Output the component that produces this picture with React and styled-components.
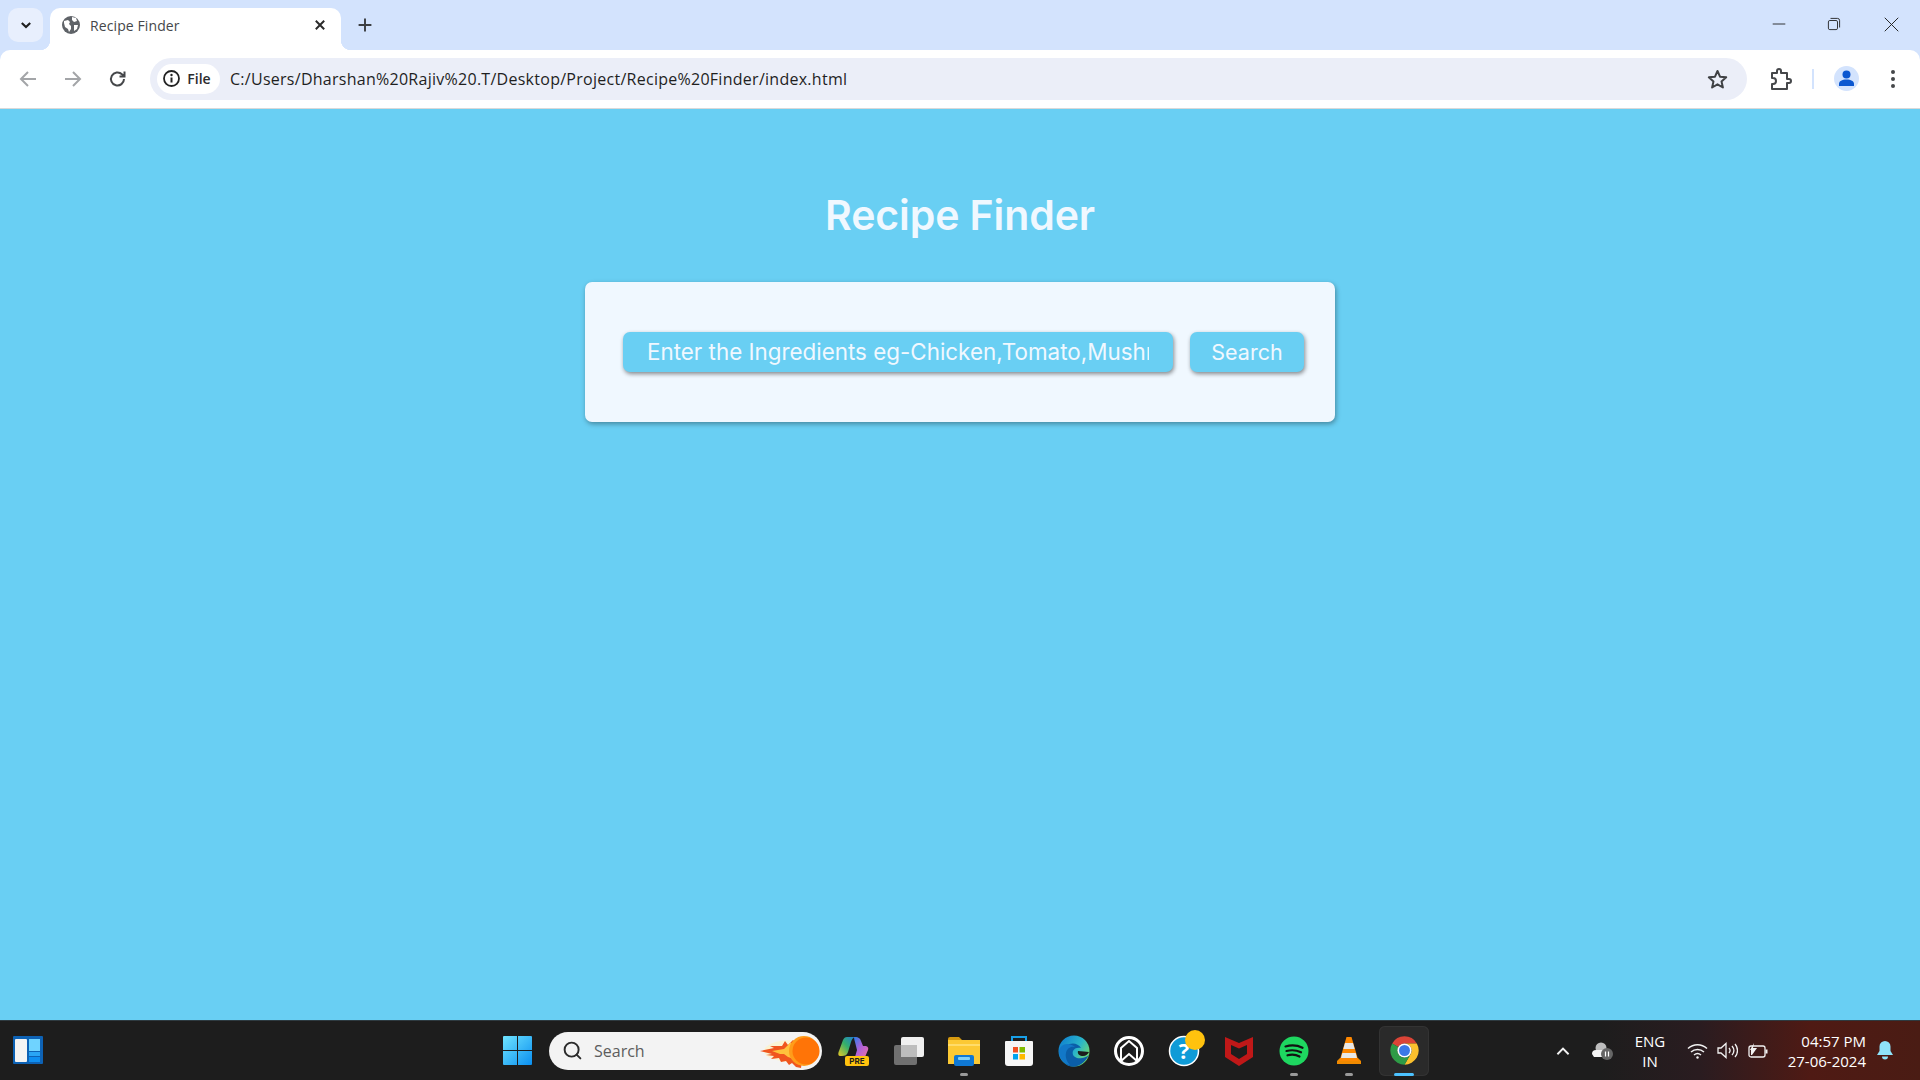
import React from 'react';
import styled, { createGlobalStyle } from 'styled-components';
import { Search as SearchGlass } from 'lucide-react';

const GlobalStyle = createGlobalStyle`
    * { box-sizing: border-box; }
    html, body { margin: 0; padding: 0; height: 100%; overflow: hidden; }
    body { font-family: "Open Sans", "Liberation Sans", sans-serif; }
    #root { height: 100%; }
`;

const Screen = styled.div`
    width: 1920px;
    height: 1080px;
    display: flex;
    flex-direction: column;
    background: #d3e3fd;
`;

/* ---------- browser chrome ---------- */
const TabStrip = styled.div`
    height: 50px;
    flex: none;
    display: flex;
    align-items: flex-end;
    padding-left: 8px;
    color: #1f1f1f;
`;
const TabList = styled.button`
    width: 35px;
    height: 34px;
    margin-bottom: 8px;
    border: 0;
    padding: 0;
    border-radius: 10px;
    background: #e8effd;
    display: flex;
    align-items: center;
    justify-content: center;
`;
const Tab = styled.div`
    position: relative;
    width: 291px;
    height: 42px;
    margin-left: 7px;
    padding: 0 14px 8px 12px;
    background: #fff;
    border-radius: 10px 10px 0 0;
    display: flex;
    align-items: center;
    &::before, &::after {
        content: "";
        position: absolute;
        bottom: 0;
        width: 10px;
        height: 10px;
    }
    &::before { left: -10px; background: radial-gradient(circle at 0 0, transparent 10px, #fff 10.5px); }
    &::after { right: -10px; background: radial-gradient(circle at 100% 0, transparent 10px, #fff 10.5px); }
`;
const TabTitle = styled.span`
    flex: 1;
    margin-left: 10px;
    font-size: 14px;
    color: #45474a;
    letter-spacing: 0.1px;
`;
const NewTab = styled.div`
    width: 30px;
    height: 42px;
    margin-left: 9px;
    padding-bottom: 8px;
    display: flex;
    align-items: center;
    justify-content: center;
`;
const WindowButtons = styled.div`
    margin-left: auto;
    height: 50px;
    display: flex;
    align-items: center;
    padding: 0 0 2px 0;
`;
const WindowButton = styled.div`
    width: ${(p) => p.$w}px;
    display: flex;
    justify-content: center;
`;

const Toolbar = styled.div`
    height: 59px;
    flex: none;
    background: #fff;
    border-radius: 10px 10px 0 0;
    border-bottom: 1px solid #d9d9d9;
    display: flex;
    align-items: center;
    padding: 0 0 1px 10px;
`;
const NavButton = styled.div`
    width: 36px;
    height: 36px;
    margin-right: ${(p) => p.$gap || 9}px;
    display: flex;
    align-items: center;
    justify-content: center;
`;
const Omnibox = styled.div`
    width: 1597px;
    height: 42px;
    padding: 0 11px 0 7px;
    background: #ebeef8;
    border-radius: 21px;
    display: flex;
    align-items: center;
`;
const FileChip = styled.div`
    width: 63px;
    height: 30px;
    padding-right: 3px;
    background: #fff;
    border-radius: 15px;
    display: flex;
    align-items: center;
    justify-content: center;
    gap: 7px;
    font-size: 14px;
    font-weight: 600;
    color: #2b2c2e;
`;
const Url = styled.span`
    margin-left: 10px;
    flex: 1;
    font-size: 16px;
    color: #1f1f1f;
    letter-spacing: 0.27px;
`;
const ToolIcons = styled.div`
    flex: 1;
    display: flex;
    align-items: center;
`;
const ToolSlot = styled.div`
    width: ${(p) => p.$w}px;
    margin-left: ${(p) => p.$ml || 0}px;
    display: flex;
    justify-content: center;
`;
const Divider = styled.div`
    width: 2px;
    height: 20px;
    background: #d3e3fd;
`;
const Avatar = styled.div`
    width: 25px;
    height: 25px;
    border-radius: 50%;
    background: #d3e3fd;
    display: flex;
    align-items: center;
    justify-content: center;
`;

/* ---------- page ---------- */
const Page = styled.main`
    flex: 1;
    min-height: 0;
    background: #69cff3;
    display: flex;
    flex-direction: column;
    align-items: center;
    padding-top: 81px;
`;
const Title = styled.h1`
    margin: 0;
    height: 50px;
    line-height: 50px;
    font-family: Inter, "Liberation Sans", sans-serif;
    font-size: 41px;
    font-weight: 600;
    letter-spacing: -0.1px;
    color: #f0f8ff;
`;
const Card = styled.div`
    width: 750px;
    height: 140px;
    margin-top: 42px;
    padding: 50px 31px 50px 38px;
    background: #f0f8ff;
    border-radius: 7px;
    box-shadow: 1px 2px 5px rgba(0, 0, 0, 0.35);
    display: flex;
    gap: 17px;
`;
const IngredientInput = styled.input`
    width: 550px;
    height: 40px;
    padding: 0 24px 2px;
    border: 0;
    outline: 0;
    border-radius: 7px;
    background: #69cff3;
    color: #f0f8ff;
    font-family: Inter, "Liberation Sans", sans-serif;
    font-size: 22.4px;
    box-shadow: 1px 2px 4px rgba(0, 0, 0, 0.45);
    &::placeholder { color: #f0f8ff; opacity: 1; }
`;
const SearchButton = styled.button`
    width: 114px;
    height: 40px;
    border: 0;
    padding: 0 0 1px;
    border-radius: 7px;
    background: #69cff3;
    color: #f0f8ff;
    font-family: Inter, "Liberation Sans", sans-serif;
    font-size: 21.5px;
    box-shadow: 1px 2px 4px rgba(0, 0, 0, 0.45);
`;

/* ---------- taskbar ---------- */
const Taskbar = styled.footer`
    height: 60px;
    flex: none;
    display: flex;
    align-items: center;
    color: #fff;
    border-top: 1px solid #2e3a40;
    background: linear-gradient(90deg, #1d1d1d 0, #1d1d1d 1600px, #2a1c20 1700px, #4f1a14 1810px, #4a1c14 1920px);
`;
const Widgets = styled.div`
    width: 30px;
    height: 30px;
    margin: 0 449px 0 13px;
    flex: none;
`;
const TaskIcon = styled.div`
    position: relative;
    width: 50px;
    height: 50px;
    margin-right: 5px;
    flex: none;
    display: flex;
    align-items: center;
    justify-content: center;
    border-radius: 6px;
    background: ${(p) => (p.$active ? '#2a2a2a' : 'transparent')};
    ${(p) => p.$active && 'box-shadow: inset 0 0 0 1px #333;'}
    &::after {
        content: "";
        display: ${(p) => (p.$active || p.$open ? 'block' : 'none')};
        position: absolute;
        bottom: 0;
        left: 50%;
        transform: translateX(-50%);
        width: ${(p) => (p.$active ? 20 : 8)}px;
        height: 3px;
        border-radius: 2px;
        background: ${(p) => (p.$active ? '#4cc2ff' : '#9a9a9a')};
    }
`;
const SearchPill = styled.div`
    position: relative;
    width: 273px;
    height: 38px;
    margin: 0 7px 0 2px;
    flex: none;
    padding-left: 13px;
    border-radius: 19px;
    background: #f3f3f3;
    display: flex;
    align-items: center;
    gap: 11px;
    font-size: 16px;
    color: #5d5d5d;
`;
const Fireball = styled.div`
    position: absolute;
    right: 2px;
    top: 2px;
    height: 34px;
`;
const Tray = styled.div`
    margin-left: auto;
    padding-right: 16px;
    display: flex;
    align-items: center;
    height: 60px;
`;
const TraySlot = styled.div`
    width: ${(p) => p.$w}px;
    display: flex;
    justify-content: center;
    align-items: center;
`;
const Lang = styled.div`
    width: 50px;
    margin-right: 9px;
    text-align: center;
    font-size: 15px;
    line-height: 20px;
`;
const Clock = styled.div`
    width: 92px;
    text-align: right;
    font-size: 15px;
    line-height: 20px;
    margin-left: 2px;
    white-space: nowrap;
`;

/* ---------- drawings ---------- */
const GlobeIcon = () => (
    <svg width="18" height="18" viewBox="0 0 18 18">
        <circle cx="9" cy="9" r="9" fill="#5f6368" />
        <path d="M2 5l4-1 2 2-1 2 2 2v3l-2 3-1-3-3-2-1-4zM10 1l4 1 1 3-3 1-2-2zM12 9h4l-1 4-3 2z" fill="#fff" />
    </svg>
);
const StrokeIcon = ({ size = 20, color = '#444', width = 2, children }) => (
    <svg width={size} height={size} viewBox="0 0 20 20" fill="none" stroke={color} strokeWidth={width}>
        {children}
    </svg>
);
const WinLogo = () => (
    <svg width="29" height="29" viewBox="0 0 29 29">
        <defs>
            <linearGradient id="win" x1="0" y1="0" x2="1" y2="1">
                <stop offset="0" stopColor="#6fe4ff" />
                <stop offset="1" stopColor="#0a8ff0" />
            </linearGradient>
        </defs>
        <path d="M1 0h13v14H0V1a1 1 0 0 1 1-1zM15 0h13a1 1 0 0 1 1 1v13H15zM0 15h14v14H1a1 1 0 0 1-1-1zM15 15h14v13a1 1 0 0 1-1 1H15z" fill="url(#win)" />
    </svg>
);
const WidgetIcon = () => (
    <svg width="30" height="30" viewBox="0 0 30 30">
        <rect width="30" height="28" fill="#0d62b5" rx="1" />
        <rect x="2" y="3" width="12" height="23" fill="#f4f4f4" rx="1" />
        <rect x="16" y="3" width="11" height="12" fill="#6fd3ff" />
        <rect x="16" y="16" width="11" height="4" fill="#2aa5f5" />
        <rect x="16" y="21" width="11" height="5" fill="#0f8ef0" />
    </svg>
);
const Flame = () => (
    <svg width="62" height="34" viewBox="0 0 62 34">
        <ellipse cx="34" cy="17" rx="28" ry="11" fill="#fff3c0" opacity="0.6" />
        <path d="M2 17l14-3-4-2 12 0 3-5 3 4 5-5 3 3 6-6 3 3-4 28-5-1-4-4-3 2-3-4-5 1-2-4-8 1 3-3-8-1 6-1z" fill="#f0561e" />
        <path d="M14 17l12-2 6-6 6 0-2 16-6-2-4-3-4 0z" fill="#ffc23c" />
        <circle cx="46" cy="17" r="15" fill="#ff9c1a" />
        <circle cx="48" cy="17" r="13.5" fill="#ff7407" />
    </svg>
);
const CopilotIcon = () => (
    <svg width="32" height="32" viewBox="0 0 32 32">
        <defs>
            <linearGradient id="cpA" x1="0" y1="1" x2="1" y2="0">
                <stop offset="0" stopColor="#e8c826" />
                <stop offset="0.5" stopColor="#34b06a" />
                <stop offset="1" stopColor="#1e78e0" />
            </linearGradient>
            <linearGradient id="cpB" x1="0" y1="0" x2="1" y2="1">
                <stop offset="0" stopColor="#2a7de8" />
                <stop offset="0.5" stopColor="#b061d8" />
                <stop offset="1" stopColor="#ee6fa8" />
            </linearGradient>
        </defs>
        <path d="M9 2h9c-3 0-4 2-5 5l-3 10c-1 3-3 4-6 4H2C0 21 0 18 1 16L5 5c1-2 2-3 4-3z" fill="url(#cpA)" />
        <path d="M16 2h2c2 0 4 1 5 4l2 5h2c2 0 4 1 3 4l-3 7H17l2-7-2-8c-1-3-1-5-1-5z" fill="url(#cpB)" />
        <rect x="7" y="21" width="24" height="10" rx="2" fill="#ffc20e" />
        <text x="19" y="29" textAnchor="middle" fontSize="8" fontWeight="700" fontFamily="Inter, sans-serif" fill="#1b1b1b">PRE</text>
    </svg>
);
const TaskViewIcon = () => (
    <svg width="31" height="28" viewBox="0 0 31 28">
        <rect x="0" y="8" width="23" height="20" rx="2" fill="#707070" />
        <rect x="7" y="0" width="23" height="20" rx="2" fill="#f0f0f0" />
        <rect x="7" y="8" width="16" height="12" fill="#bdbdbd" />
    </svg>
);
const FolderIcon = () => (
    <svg width="32" height="30" viewBox="0 0 32 30">
        <path d="M0 3a2 2 0 0 1 2-2h9l3 3H0z" fill="#d69a10" />
        <path d="M0 4h32v24H0z" fill="#fcc934" />
        <path d="M0 8h32v2H0z" fill="#ffdc6a" />
        <rect x="6" y="19" width="20" height="11" rx="2" fill="#0f78d4" />
        <rect x="10" y="21" width="12" height="3" rx="1" fill="#7ed0fa" />
    </svg>
);
const StoreIcon = () => (
    <svg width="30" height="32" viewBox="0 0 30 32">
        <path d="M8 7V2h14v5" fill="none" stroke="#18a0e8" strokeWidth="2" />
        <path d="M2 6h26a1 1 0 0 1 1 1v21a3 3 0 0 1-3 3H4a3 3 0 0 1-3-3V7a1 1 0 0 1 1-1z" fill="#f6f6f6" />
        <rect x="9" y="12" width="5" height="5.5" fill="#f25022" />
        <rect x="15.5" y="12" width="5.5" height="5.5" fill="#7fba00" />
        <rect x="9" y="19" width="5" height="5.5" fill="#00a4ef" />
        <rect x="15.5" y="19" width="5.5" height="5.5" fill="#ffb900" />
    </svg>
);
const EdgeIcon = () => (
    <svg width="32" height="32" viewBox="0 0 32 32">
        <defs>
            <linearGradient id="edgeTop" x1="0" y1="0.2" x2="1" y2="0.8">
                <stop offset="0" stopColor="#0f80d0" />
                <stop offset="0.55" stopColor="#2bb6c8" />
                <stop offset="1" stopColor="#7ee05e" />
            </linearGradient>
        </defs>
        <circle cx="16" cy="16" r="15.5" fill="url(#edgeTop)" />
        <path d="M31 20c-2 2-8 4-12 3-4-1-5-4-4-7 1-3 5-4 8-3 -3-5-10-6-15-2-6 5-6 14 1 19 5 3 15 3 22-10z" fill="#0b5ea8" />
        <path d="M1 17c0-5 4-8 8-8 5 0 8 3 8 3-4-1-8 1-9 6-1 4 1 9 4 12C6 29 1 24 1 17z" fill="#1278c8" />
        <path d="M20 16c4 0 8 1 11 1 -1 2-3 4-6 4-3 0-6-2-5-5z" fill="#1d1d1d" />
    </svg>
);
const ArchIcon = () => (
    <svg width="30" height="30" viewBox="0 0 30 30">
        <circle cx="15" cy="15" r="13.5" fill="#1d1d1d" stroke="#fff" strokeWidth="3" />
        <path d="M7 12l8-7 8 7v13l-8-7-8 7z" fill="none" stroke="#fff" strokeWidth="2" />
    </svg>
);
const HelpIcon = () => (
    <svg width="46" height="44" viewBox="0 0 46 44">
        <circle cx="23" cy="22" r="14.5" fill="#0f9bd7" stroke="#fff" strokeWidth="1.5" />
        <text x="23" y="30" textAnchor="middle" fontSize="22" fontWeight="700" fontFamily="Open Sans, sans-serif" fill="#fff">?</text>
        <circle cx="34" cy="11" r="10" fill="#ffc20e" />
    </svg>
);
const McafeeIcon = () => (
    <svg width="28" height="30" viewBox="0 0 28 30">
        <path d="M0 1l14 6 14-6v20l-14 9-14-9z" fill="#c01818" />
        <path d="M6 9l8 3.5L22 9v9l-8 5-8-5z" fill="#1d1d1d" />
    </svg>
);
const SpotifyIcon = () => (
    <svg width="30" height="30" viewBox="0 0 30 30">
        <circle cx="15" cy="15" r="14.5" fill="#1ed760" />
        <path d="M6.5 10.5c6-1.7 12-1.2 17 1.3M7.5 15c5-1.3 10-0.9 14.500 1.300M8.500 19.300c4-1 8.500-0.700 12 1.200" fill="none" stroke="#121212" strokeWidth="2.200" strokeLinecap="round" />
    </svg>
);
const VlcIcon = () => (
    <svg width="26" height="29" viewBox="0 0 26 29">
        <path d="M1 25l3-3h18l3 3v3H1z" fill="#f08a00" />
        <path d="M10.500 1h5l7 24H3.500z" fill="#ff8800" />
        <path d="M9 7h8l1.700 6H7.300zM6.300 17h13.400l1.300 5H5z" fill="#e8e8e8" />
    </svg>
);
const ChromeIcon = () => (
    <svg width="31" height="31" viewBox="0 0 48 48">
        <path d="M24 2A22 22 0 0 1 43.05 13H24A11 11 0 0 0 14.47 18.5L4.95 13A22 22 0 0 1 24 2Z" fill="#db4437" />
        <path d="M43.05 13A22 22 0 0 1 24 46L33.53 29.5A11 11 0 0 0 24 13Z" fill="#fbc02d" />
        <path d="M24 46A22 22 0 0 1 4.95 13L14.47 18.5A11 11 0 0 0 33.53 29.5Z" fill="#2e9b46" />
        <circle cx="24" cy="24" r="11" fill="#fff" />
        <circle cx="24" cy="24" r="8.500" fill="#3b78e7" />
    </svg>
);

const taskIcons = [
    { id: 'copilot', icon: <CopilotIcon /> },
    { id: 'taskview', icon: <TaskViewIcon /> },
    { id: 'files', icon: <FolderIcon />, open: true },
    { id: 'store', icon: <StoreIcon /> },
    { id: 'edge', icon: <EdgeIcon /> },
    { id: 'arch', icon: <ArchIcon /> },
    { id: 'help', icon: <HelpIcon /> },
    { id: 'mcafee', icon: <McafeeIcon /> },
    { id: 'spotify', icon: <SpotifyIcon />, open: true },
    { id: 'vlc', icon: <VlcIcon />, open: true },
    { id: 'chrome', icon: <ChromeIcon />, active: true },
];

function App() {
    return (
        <Screen>
            <GlobalStyle />
            <TabStrip>
                <TabList>
                    <StrokeIcon size={14} color="#1f1f1f" width={3}><path d="M4 7l6 6 6-6" /></StrokeIcon>
                </TabList>
                <Tab>
                    <GlobeIcon />
                    <TabTitle>Recipe Finder</TabTitle>
                    <StrokeIcon size={14} color="#2a2a2a" width={2.800}><path d="M4 4l12 12M16 4L4 16" /></StrokeIcon>
                </Tab>
                <NewTab>
                    <StrokeIcon size={16} color="#3c3f43" width={2.400}><path d="M10 2v16M2 10h16" /></StrokeIcon>
                </NewTab>
                <WindowButtons>
                    <WindowButton $w={52}>
                        <StrokeIcon size={14} color="#222" width={1.300}><path d="M1 10h18" /></StrokeIcon>
                    </WindowButton>
                    <WindowButton $w={58.5}>
                        <StrokeIcon size={14} color="#222" width={1.300}>
                            <rect x="2" y="5" width="13" height="13" rx="2" />
                            <path d="M5 2h10a3 3 0 0 1 3 3v10" />
                        </StrokeIcon>
                    </WindowButton>
                    <WindowButton $w={56.5}>
                        <StrokeIcon size={15} color="#222" width={1.300}><path d="M1 1l18 18M19 1L1 19" /></StrokeIcon>
                    </WindowButton>
                </WindowButtons>
            </TabStrip>
            <Toolbar>
                <NavButton>
                    <StrokeIcon color="#a3a5a8"><path d="M18 10H3M10 3l-7 7 7 7" /></StrokeIcon>
                </NavButton>
                <NavButton>
                    <StrokeIcon color="#a3a5a8"><path d="M2 10h15M10 3l7 7-7 7" /></StrokeIcon>
                </NavButton>
                <NavButton $gap={14}>
                    <StrokeIcon color="#45474a"><path d="M16 10a6.500 6.500 0 1 1-2-4.700L16.500 7.500M16.500 2.500v5h-5" /></StrokeIcon>
                </NavButton>
                <Omnibox>
                    <FileChip>
                        <svg width="17" height="17" viewBox="0 0 17 17">
                            <circle cx="8.500" cy="8.500" r="7.500" fill="none" stroke="#222" strokeWidth="1.800" />
                            <path d="M8.500 7.500v5" stroke="#222" strokeWidth="2" />
                            <circle cx="8.500" cy="5" r="1.200" fill="#222" />
                        </svg>
                        File
                    </FileChip>
                    <Url>C:/Users/Dharshan%20Rajiv%20.T/Desktop/Project/Recipe%20Finder/index.html</Url>
                    <svg width="21" height="20" viewBox="0 0 21 20" style={{ marginRight: 8 }}>
                        <path d="M10.500 2l2.500 5.700 6.200.6-4.700 4.100 1.400 6.100-5.400-3.200-5.400 3.200 1.400-6.100L1.800 8.300 8 7.700z" fill="none" stroke="#3f4144" strokeWidth="2" strokeLinejoin="round" />
                    </svg>
                </Omnibox>
                <ToolIcons>
                    <ToolSlot $w={62} $ml={3}>
                        <svg width="22" height="22" viewBox="0 0 22 22">
                            <path d="M2 5h5V3a2 2 0 0 1 4 0v2h6v6h2a2 2 0 0 1 0 4h-2v6H2v-5h1a3 3 0 0 0 0-6H2z" fill="none" stroke="#45474a" strokeWidth="2" strokeLinejoin="round" />
                        </svg>
                    </ToolSlot>
                    <Divider />
                    <ToolSlot $w={65}>
                        <Avatar>
                            <svg width="17" height="17" viewBox="0 0 17 17">
                                <circle cx="8.500" cy="4.500" r="4" fill="#0b57d0" />
                                <path d="M1 16v-2c0-3 3-4.500 7.500-4.500S16 11 16 14v2z" fill="#0b57d0" />
                            </svg>
                        </Avatar>
                    </ToolSlot>
                    <ToolSlot $w={27}>
                        <svg width="6" height="20" viewBox="0 0 6 20">
                            <circle cx="3" cy="3" r="2" fill="#45474a" />
                            <circle cx="3" cy="10" r="2" fill="#45474a" />
                            <circle cx="3" cy="17" r="2" fill="#45474a" />
                        </svg>
                    </ToolSlot>
                </ToolIcons>
            </Toolbar>
            <Page>
                <Title>Recipe Finder</Title>
                <Card>
                    <IngredientInput placeholder="Enter the Ingredients eg-Chicken,Tomato,Mushroom" />
                    <SearchButton>Search</SearchButton>
                </Card>
            </Page>
            <Taskbar>
                <Widgets><WidgetIcon /></Widgets>
                <TaskIcon><WinLogo /></TaskIcon>
                <SearchPill>
                    <SearchGlass size={21} color="#2b2b2b" strokeWidth={2.200} />
                    Search
                    <Fireball><Flame /></Fireball>
                </SearchPill>
                {taskIcons.map((item) => (
                    <TaskIcon key={item.id} $open={item.open} $active={item.active}>{item.icon}</TaskIcon>
                ))}
                <Tray>
                    <TraySlot $w={32}>
                        <StrokeIcon size={16} color="#f2f2f2" width={2.400}><path d="M3 14l7-7 7 7" /></StrokeIcon>
                    </TraySlot>
                    <TraySlot $w={46}>
                        <svg width="22" height="18" viewBox="0 0 22 18">
                            <circle cx="10" cy="6" r="5.500" fill="#bdbdbd" />
                            <path d="M1 12a4 4 0 0 1 4-4h9v7H3z" fill="#f5f5f5" />
                            <circle cx="16" cy="12" r="6" fill="#666" />
                            <path d="M14.500 9.500v5M17.500 9.500v5" stroke="#fff" strokeWidth="1.200" />
                        </svg>
                    </TraySlot>
                    <Lang>ENG<br />IN</Lang>
                    <TraySlot $w={27}>
                        <svg width="21" height="16" viewBox="0 0 21 16" fill="none" stroke="#f2f2f2" strokeWidth="1.500">
                            <path d="M1 5.500c5.500-5 13.500-5 19 0M4 9c3.800-3.300 9.200-3.300 13 0M7 12c2-1.600 5-1.600 7 0" />
                            <circle cx="10.500" cy="14.500" r="1.200" fill="#f2f2f2" stroke="none" />
                        </svg>
                    </TraySlot>
                    <TraySlot $w={33}>
                        <svg width="21" height="17" viewBox="0 0 21 17" fill="none" stroke="#f2f2f2" strokeWidth="1.300">
                            <path d="M1 6h3l5-4.500v14L4 11H1zM12 6c1.300 1.500 1.300 3.500 0 5M15 4c2.300 2.700 2.300 6.300 0 9M18 2c3.300 3.800 3.300 9.200 0 13" />
                        </svg>
                    </TraySlot>
                    <TraySlot $w={28}>
                        <svg width="20" height="16" viewBox="0 0 20 16">
                            <rect x="1" y="3" width="16" height="11" rx="2" fill="none" stroke="#f2f2f2" strokeWidth="1.300" />
                            <rect x="17.500" y="6.500" width="2" height="4" fill="#f2f2f2" />
                            <path d="M3 5h6L4 12H3z" fill="#f2f2f2" />
                            <path d="M6 0L2 7h3l-1 4 4-6H5z" fill="#f2f2f2" />
                        </svg>
                    </TraySlot>
                    <Clock>04:57 PM<br />27-06-2024</Clock>
                    <TraySlot $w={38}>
                        <svg width="16" height="19" viewBox="0 0 16 19">
                            <path d="M8 0a5.500 5.500 0 0 1 5.500 5.500V10l2.500 4H0l2.500-4V5.500A5.500 5.500 0 0 1 8 0z" fill="#8fe4fa" />
                            <path d="M5 15.500h6a3 3 0 0 1-6 0z" fill="#8fe4fa" />
                        </svg>
                    </TraySlot>
                </Tray>
            </Taskbar>
        </Screen>
    );
}

export default App;
